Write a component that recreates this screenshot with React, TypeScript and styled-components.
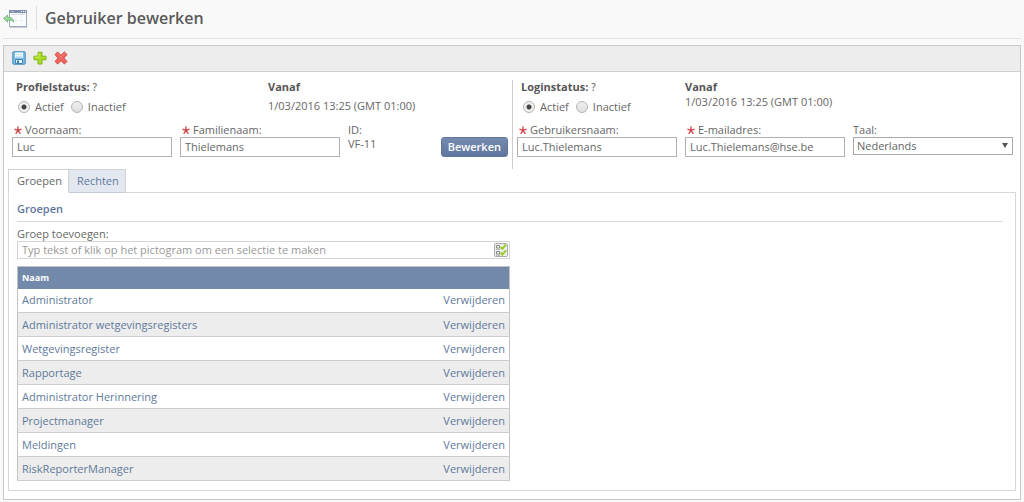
import React, { useState } from 'react';
import styled, { createGlobalStyle } from 'styled-components';

const Global = createGlobalStyle`
  *, *::before, *::after { box-sizing: border-box; }
  body {
    margin: 0;
    background: #f9f9f9;
    color: #666;
    font: 11px/16px 'Open Sans', sans-serif;
  }
  button, input, select { font: inherit; color: inherit; margin: 0; }
`;

const Page = styled.div`
  padding: 0 3px 2px;
`;

const Header = styled.header`
  display: flex;
  align-items: center;
  gap: 8px;
  height: 39px;
  padding-bottom: 2px;
  border-bottom: 1px solid #e2e2e2;
`;

const BackLink = styled.a`
  display: flex;
`;

const Title = styled.h1`
  margin: 0;
  padding: 3px 0 3px 8px;
  border-left: 1px solid #dcdcdc;
  font-size: 16px;
  font-weight: 600;
  line-height: 18px;
  color: #5a5a5a;
`;

const Panel = styled.main`
  margin-top: 6px;
  background: #fff;
  border: 1px solid #c8c8c8;
`;

const Toolbar = styled.div`
  display: flex;
  align-items: center;
  gap: 7px;
  height: 26px;
  padding: 0 8px 1px;
  background: #ededed;
  border-bottom: 1px solid #cfcfcf;
`;

const IconButton = styled.button`
  display: flex;
  padding: 0;
  border: 0;
  background: none;
  cursor: pointer;
`;

const Form = styled.form`
  display: flex;
  padding: 8px 0 0;
`;

const Section = styled.section<{ $divided?: boolean }>`
  flex: 1 1 0;
  min-width: 0;
  min-height: 89px;
  padding: ${p => (p.$divided ? '0 4px 0 8px' : '0 7px 0 4px')};
  border-right: ${p => (p.$divided ? '1px solid #ccc' : '0')};
`;

const Columns = styled.div<{ $count: number; $gapTop?: boolean }>`
  display: grid;
  grid-template-columns: repeat(${p => p.$count}, minmax(0, 1fr));
  column-gap: 8px;
  margin-top: ${p => (p.$gapTop ? '8px' : '0')};
`;

const Status = styled.fieldset<{ $indent?: boolean }>`
  min-width: 0;
  margin: 0;
  padding: 0 0 0 ${p => (p.$indent ? '4px' : '0')};
  border: 0;
`;

const StatusTitle = styled.legend`
  padding: 0;
  font-weight: 700;
  line-height: 14px;
  color: #555;
`;

const Help = styled.span`
  font-size: 10px;
  font-weight: 600;
  color: #777;
`;

const Radios = styled.div`
  display: flex;
  gap: 7px;
  padding: 5px 0 0 2px;
`;

const RadioLabel = styled.label`
  display: flex;
  align-items: center;
  gap: 5px;
`;

const Radio = styled.input.attrs({ type: 'radio' })`
  appearance: none;
  width: 12px;
  height: 12px;
  border: 1px solid #b4b4b4;
  border-radius: 50%;
  background: linear-gradient(#f0f0f0, #dedede);
  &:checked {
    background: radial-gradient(circle, #444 0 2px, #f0f0f0 3px);
  }
`;

const Since = styled.div<{ $loose?: boolean }>`
  padding-top: ${p => (p.$loose ? '4px' : '0')};
  line-height: 16px;
  white-space: nowrap;
`;

const Field = styled.div`
  min-width: 0;
`;

const Label = styled.label<{ $required?: boolean }>`
  display: flex;
  align-items: center;
  gap: 3px;
  height: 14px;
  padding-left: ${p => (p.$required ? '2px' : '0')};
`;

const Caption = styled.div`
  height: 14px;
  line-height: 14px;
`;

const TextInput = styled.input`
  display: block;
  width: 100%;
  height: 20px;
  padding: 0 4px 2px;
  border: 1px solid #b0b0b0;
  background: #fff;
`;

const SelectWrap = styled.div`
  position: relative;
  svg {
    position: absolute;
    right: 5px;
    top: 6px;
    pointer-events: none;
  }
`;

const Select = styled.select`
  appearance: none;
  display: block;
  width: 100%;
  height: 18px;
  padding: 0 3px;
  border: 1px solid #a9a9a9;
  border-radius: 0;
  background: #fff;
  line-height: 16px;
`;

const IdField = styled.div`
  display: flex;
  justify-content: space-between;
`;

const EditButton = styled.button`
  align-self: flex-end;
  height: 20px;
  padding: 0 6px;
  border: 1px solid #5f769c;
  border-radius: 3px;
  background: linear-gradient(#7489ae, #5f769f);
  color: #fff;
  font-weight: 600;
  line-height: 18px;
`;

const Tabs = styled.div`
  display: flex;
  margin: 0 4px -1px;
  position: relative;
`;

const Tab = styled.button<{ $active: boolean }>`
  height: 24px;
  padding: 0 6px 0 8px;
  border: 1px solid #d2d2d2;
  border-left-width: ${p => (p.$active ? '1px' : '0')};
  border-bottom-color: ${p => (p.$active ? '#fff' : '#c4ccd6')};
  background: ${p => (p.$active ? '#fff' : '#e3e8f0')};
  color: ${p => (p.$active ? '#666' : '#5f789b')};
`;

const TabPanel = styled.div`
  margin: 0 4px 8px;
  padding: 8px 12px 9px 8px;
  border: 1px solid #d8d8d8;
`;

const Heading = styled.h2`
  margin: 0 0 5px;
  padding-bottom: 4px;
  border-bottom: 1px solid #d8dade;
  font-size: 11px;
  font-weight: 600;
  line-height: 16px;
  color: #5f789b;
`;

const Groups = styled.div`
  width: 50%;
`;

const PickerBox = styled.div`
  display: flex;
  align-items: center;
  height: 18px;
  margin-bottom: 7px;
  padding-right: 1px;
  border: 1px solid #d4d4d4;
`;

const PickerInput = styled.input`
  flex: 1;
  min-width: 0;
  height: 16px;
  padding: 0 4px;
  border: 0;
  background: transparent;
  &::placeholder { color: #999; opacity: 1; }
`;

const Table = styled.table`
  width: 100%;
  border-collapse: collapse;
  border: 1px solid #c2c2c2;
`;

const HeadCell = styled.th`
  height: 22px;
  padding: 0 4px;
  background: #7389aa;
  color: #fff;
  font-size: 9px;
  font-weight: 700;
  text-align: left;
`;

const Row = styled.tr`
  border-bottom: 1px solid #ccc;
  &:nth-child(even) { background: #ededed; }
`;

const Cell = styled.td<{ $end?: boolean }>`
  height: 24px;
  padding: 0 4px;
  text-align: ${p => (p.$end ? 'right' : 'left')};
`;

const Link = styled.a`
  color: #61799a;
  text-decoration: none;
`;

const Asterisk = () => (
  <svg width="8" height="10" viewBox="0 0 8 10" fill="none" stroke="#d0484c" strokeWidth="1.4" aria-hidden="true">
    <path d="M4 1.5V5.4M.4 4.1L4 5.4l3.6-1.3M1.7 8.8L4 5.4l2.3 3.4" />
  </svg>
);

const BackIcon = () => (
  <svg width="25" height="19" viewBox="0 0 25 19" aria-hidden="true">
    <rect x="6.5" y="1.5" width="17" height="16" fill="#fafcfe" stroke="#9eabbd" />
    <path d="M6 1h18v3H6z" fill="#8191ac" />
    <path d="M8 2.500h3" stroke="#b4bfce" />
    <path d="M18 2.500h1m1 0h1m1 0h1" stroke="#fff" />
    <path d="M8 5.500h14" stroke="#d5dde8" />
    <path d="M13 7v9m5-9v9M8 11.500h14" stroke="#edf1f6" />
    <path d="M7 18.500h17" stroke="#c5ccd5" />
    <path d="M.5 9.500L4.500 6v2.200c4.200 0 6 1.400 6 5C9 11.400 7.500 11 4.500 11v2.200z" fill="#a0d8a0" stroke="#6fb374" strokeWidth=".8" />
  </svg>
);

const SaveIcon = () => (
  <svg width="14" height="14" viewBox="0 0 14 14" aria-hidden="true">
    <rect x=".8" y=".8" width="12.400" height="12.400" rx=".8" fill="#7cc0e8" stroke="#3f88ba" />
    <path d="M3 1.500h8v5H3z" fill="#f1f9fe" />
    <path d="M4 3.500h6M4 5.500h6" stroke="#c5e1f2" />
    <path d="M3.500 8.500h7v4h-7z" fill="#e8f1f7" stroke="#4286b3" />
    <path d="M5 9.500h2V12H5z" fill="#3e7ba5" />
  </svg>
);

const AddIcon = () => (
  <svg width="14" height="14" viewBox="0 0 14 14" aria-hidden="true">
    <path d="M5 1.200h4V5.200h4v3.600H9V13H5V8.800H1V5.200h4z" fill="#aadc24" stroke="#7fb51e" strokeLinejoin="round" />
    <path d="M6 2.200v4H2" fill="none" stroke="#cdee60" />
  </svg>
);

const DeleteIcon = () => (
  <svg width="14" height="14" viewBox="0 0 14 14" aria-hidden="true">
    <path d="M3.600 1L7 4.300 10.400 1 13 3.600 9.800 7l3.200 3.400-2.600 2.600L7 9.700 3.600 13 1 10.400 4.200 7 1 3.600z" fill="#f0665e" stroke="#d04844" strokeLinejoin="round" />
    <path d="M3.500 2.500L7 6l3.500-3.500" fill="none" stroke="#f79089" strokeWidth=".8" />
  </svg>
);

const PickIcon = () => (
  <svg width="14" height="14" viewBox="0 0 14 14" aria-hidden="true">
    <rect x=".5" y=".5" width="13" height="13" rx="1" fill="#ededed" stroke="#aaa" />
    <path d="M2.500 2.500h3v2.500h-3zM2.500 8.500h3V11h-3z" fill="#fff" stroke="#858585" />
    <path d="M2 6.500h4M2 12.500h4" stroke="#bbb" />
    <path d="M6.700 4l1.600 1.800L12 1.500M6.700 9.700l1.600 1.900L12 7.300" fill="none" stroke="#9acb23" strokeWidth="2" />
  </svg>
);

const ArrowIcon = () => (
  <svg width="6" height="5" viewBox="0 0 6 5" aria-hidden="true">
    <path d="M0 0h6L3 5z" fill="#555" />
  </svg>
);

function StatusChoice({ title, name }: { title: string; name: string }) {
  return (
    <Status $indent>
      <StatusTitle>{title} <Help>?</Help></StatusTitle>
      <Radios>
        <RadioLabel><Radio name={name} defaultChecked />Actief</RadioLabel>
        <RadioLabel><Radio name={name} />Inactief</RadioLabel>
      </Radios>
    </Status>
  );
}

function RequiredField({ id, label, value }: { id: string; label: string; value: string }) {
  return (
    <Field>
      <Label htmlFor={id} $required><Asterisk />{label}</Label>
      <TextInput id={id} defaultValue={value} required />
    </Field>
  );
}

const groups = [
  'Administrator',
  'Administrator wetgevingsregisters',
  'Wetgevingsregister',
  'Rapportage',
  'Administrator Herinnering',
  'Projectmanager',
  'Meldingen',
  'RiskReporterManager',
];

export default function App() {
  const [tab, setTab] = useState('Groepen');
  return (
    <Page>
      <Global />
      <Header>
        <BackLink href="#" aria-label="Terug"><BackIcon /></BackLink>
        <Title>Gebruiker bewerken</Title>
      </Header>
      <Panel>
        <Toolbar>
          <IconButton type="button" aria-label="Opslaan"><SaveIcon /></IconButton>
          <IconButton type="button" aria-label="Toevoegen"><AddIcon /></IconButton>
          <IconButton type="button" aria-label="Verwijderen"><DeleteIcon /></IconButton>
        </Toolbar>
        <Form>
          <Section $divided>
            <Columns $count={2}>
              <StatusChoice title="Profielstatus:" name="profile" />
              <Status $indent>
                <StatusTitle>Vanaf</StatusTitle>
                <Since $loose>1/03/2016 13:25 (GMT 01:00)</Since>
              </Status>
            </Columns>
            <Columns $count={3} $gapTop>
              <RequiredField id="first" label="Voornaam:" value="Luc" />
              <RequiredField id="last" label="Familienaam:" value="Thielemans" />
              <IdField>
                <div>
                  <Caption>ID:</Caption>
                  <Caption>VF-11</Caption>
                </div>
                <EditButton type="button">Bewerken</EditButton>
              </IdField>
            </Columns>
          </Section>
          <Section>
            <Columns $count={3}>
              <StatusChoice title="Loginstatus:" name="login" />
              <Status>
                <StatusTitle>Vanaf</StatusTitle>
                <Since>1/03/2016 13:25 (GMT 01:00)</Since>
              </Status>
            </Columns>
            <Columns $count={3} $gapTop>
              <RequiredField id="user" label="Gebruikersnaam:" value="Luc.Thielemans" />
              <RequiredField id="mail" label="E-mailadres:" value="Luc.Thielemans@hse.be" />
              <Field>
                <Label htmlFor="lang">Taal:</Label>
                <SelectWrap>
                  <Select id="lang"><option>Nederlands</option></Select>
                  <ArrowIcon />
                </SelectWrap>
              </Field>
            </Columns>
          </Section>
        </Form>
        <Tabs role="tablist">
          {['Groepen', 'Rechten'].map(name => (
            <Tab key={name} type="button" role="tab" aria-selected={tab === name} $active={tab === name} onClick={() => setTab(name)}>
              {name}
            </Tab>
          ))}
        </Tabs>
        <TabPanel role="tabpanel">
          <Heading>Groepen</Heading>
          <Groups>
            <Label htmlFor="group">Groep toevoegen:</Label>
            <PickerBox>
              <PickerInput id="group" placeholder="Typ tekst of klik op het pictogram om een selectie te maken" />
              <IconButton type="button" aria-label="Selecteren"><PickIcon /></IconButton>
            </PickerBox>
            <Table>
              <thead>
                <tr><HeadCell colSpan={2}>Naam</HeadCell></tr>
              </thead>
              <tbody>
                {groups.map(group => (
                  <Row key={group}>
                    <Cell><Link href="#">{group}</Link></Cell>
                    <Cell $end><Link href="#">Verwijderen</Link></Cell>
                  </Row>
                ))}
              </tbody>
            </Table>
          </Groups>
        </TabPanel>
      </Panel>
    </Page>
  );
}
